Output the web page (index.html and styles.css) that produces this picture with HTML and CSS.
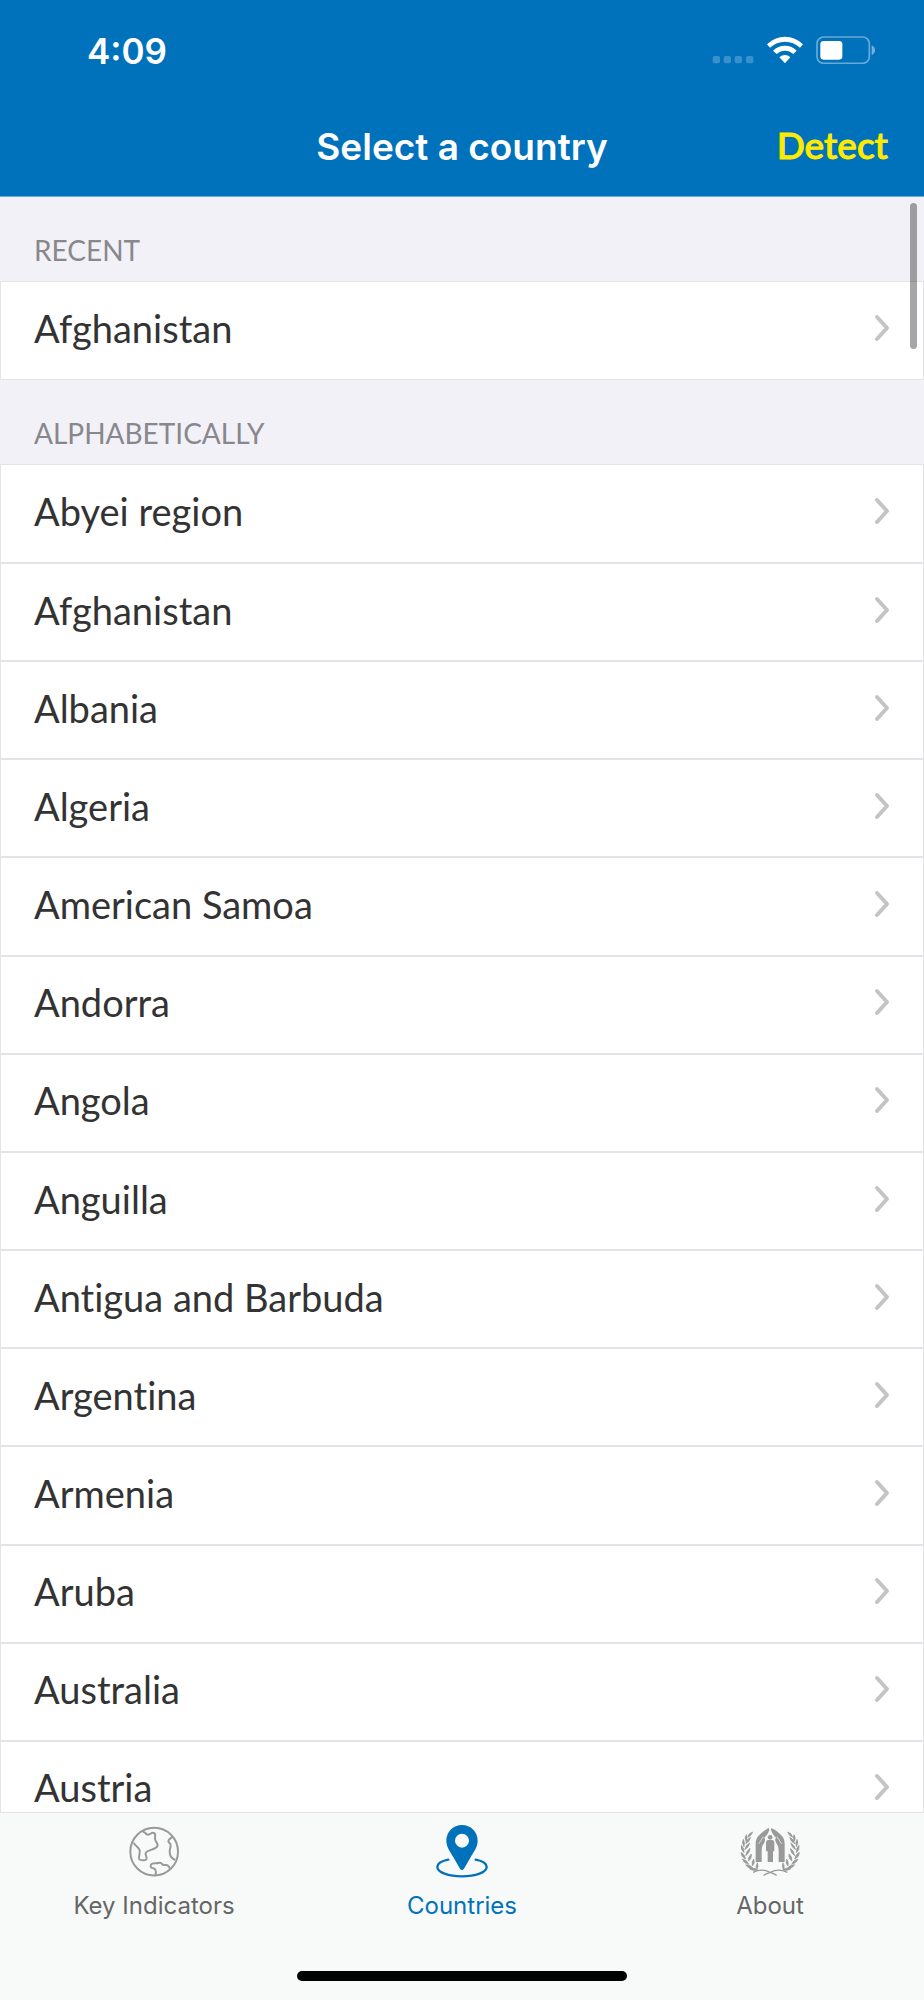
FILE: index.html
```html
<!DOCTYPE html>
<html lang="en">
<head>
<meta charset="utf-8">
<meta name="viewport" content="width=device-width, initial-scale=1">
<title>Select a country</title>
<link rel="stylesheet" href="styles.css">
</head>
<body>
<svg class="defs" aria-hidden="true">
  <symbol id="chevron" viewBox="0 0 16 28"><path d="M3 3l10 11L3 25" fill="none" stroke="currentColor" stroke-width="4" stroke-linecap="round" stroke-linejoin="round"/></symbol>
</svg>
<div class="app">
  <header class="top">
    <div class="status">
      <time class="clock">4:09</time>
      <div class="indicators">
        <svg class="signal" viewBox="96 78 126 84" aria-hidden="true"><g fill="#fff" opacity=".22"><rect x="98" y="138" width="22" height="22" rx="6"/><rect x="131" y="138" width="22" height="22" rx="6"/><rect x="164" y="138" width="22" height="22" rx="6"/><rect x="198" y="138" width="22" height="22" rx="6"/></g></svg>
        <svg class="wifi" viewBox="262 78 108 84" aria-hidden="true"><path fill="#fff" d="M262 103Q285 80 316 80T370 103L361 113Q342 95 316 95T271 113ZM280 122Q295 107 316 107T351 122L341 132Q330 122 316 122T291 132ZM299 142Q307 135 316 135T332 142L316 160Z"/></svg>
        <svg class="battery" viewBox="410 78 180 84" aria-hidden="true"><rect x="413" y="81" width="157" height="79" rx="20" fill="none" stroke="#fff" stroke-opacity=".4" stroke-width="5"/><rect x="423" y="93" width="66" height="56" rx="10" fill="#fff"/><path d="M577 106q10 5 10 14.500t-10 14.500z" fill="#fff" opacity=".45"/></svg>
      </div>
    </div>
    <div class="navbar">
      <h1 class="title">Select a country</h1>
      <button class="detect" type="button">Detect</button>
    </div>
  </header>
  <main class="content">
    <h2 class="section">RECENT</h2>
    <ul class="list">
      <li class="item"><a class="row" href="#">Afghanistan<svg class="chevron"><use href="#chevron"/></svg></a></li>
    </ul>
    <h2 class="section">ALPHABETICALLY</h2>
    <ul class="list countries">
      <li class="item"><a class="row" href="#">Abyei region<svg class="chevron"><use href="#chevron"/></svg></a></li>
      <li class="item"><a class="row" href="#">Afghanistan<svg class="chevron"><use href="#chevron"/></svg></a></li>
      <li class="item"><a class="row" href="#">Albania<svg class="chevron"><use href="#chevron"/></svg></a></li>
      <li class="item"><a class="row" href="#">Algeria<svg class="chevron"><use href="#chevron"/></svg></a></li>
      <li class="item"><a class="row" href="#">American Samoa<svg class="chevron"><use href="#chevron"/></svg></a></li>
      <li class="item"><a class="row" href="#">Andorra<svg class="chevron"><use href="#chevron"/></svg></a></li>
      <li class="item"><a class="row" href="#">Angola<svg class="chevron"><use href="#chevron"/></svg></a></li>
      <li class="item"><a class="row" href="#">Anguilla<svg class="chevron"><use href="#chevron"/></svg></a></li>
      <li class="item"><a class="row" href="#">Antigua and Barbuda<svg class="chevron"><use href="#chevron"/></svg></a></li>
      <li class="item"><a class="row" href="#">Argentina<svg class="chevron"><use href="#chevron"/></svg></a></li>
      <li class="item"><a class="row" href="#">Armenia<svg class="chevron"><use href="#chevron"/></svg></a></li>
      <li class="item"><a class="row" href="#">Aruba<svg class="chevron"><use href="#chevron"/></svg></a></li>
      <li class="item"><a class="row" href="#">Australia<svg class="chevron"><use href="#chevron"/></svg></a></li>
      <li class="item"><a class="row" href="#">Austria<svg class="chevron"><use href="#chevron"/></svg></a></li>
    </ul>
    <div class="scrollbar"></div>
  </main>
  <footer class="bottom">
    <nav class="tabs">
      <a class="tab" href="#">
        <svg class="tab-icon" viewBox="42 30 180 180" fill="none" stroke="#999" stroke-width="6" stroke-linejoin="round" aria-hidden="true"><circle cx="132.500" cy="125" r="71.500"/><path d="M98 65C107 65 105 74 114 74C122 73 124 67 130 68C137 69 136 77 135 84C134 95 143 97 143 106C143 115 133 115 125 119C118 122 109 123 107 129C105 136 113 142 109 148C105 152 91 151 88 148C84 143 91 131 89 121C86 110 76 110 71 98M187 81C181 86 175 88 175 94C175 98 182 99 182 106C182 114 178 118 179 127C180 138 187 147 196 150M136 196C140 185 137 177 130 175C124 174 120 171 123 164C126 157 138 161 144 159C151 157 154 158 156 162C159 168 169 162 174 167C176 169 178 172 180 176"/></svg>
        <span>Key Indicators</span>
      </a>
      <a class="tab active" href="#" aria-current="page">
        <svg class="tab-icon" viewBox="36 30 180 180" aria-hidden="true"><path fill="#0072bc" fill-rule="evenodd" d="M126 45C152 45 173 65 173 92C173 112 160 127 151 143L132 176Q126 184 120 176L101 143C92 127 79 112 79 92C79 65 100 45 126 45ZM126 71a21 21 0 1 0 0 42a21 21 0 1 0 0-42Z"/><path fill="none" stroke="#0072bc" stroke-width="7" stroke-linecap="round" d="M85 149C64 153 52 161 52 171C52 187 85 199 126 199S200 187 200 171C200 161 188 153 167 149"/></svg>
        <span>Countries</span>
      </a>
      <a class="tab" href="#">
        <svg class="tab-icon" viewBox="57 30 180 180" aria-hidden="true">
          <defs>
            <g id="emblem-half">
              <path d="M144 54L145 61C140 73 134 81 129 84C134 85 132 92 130 98C124 106 122 112 122 124V156H104V103C104 92 106 85 112 78C120 69 132 59 144 54Z"/>
              <path d="M127 80L113 102" stroke="#f8faf9" stroke-width="2"/>
              <path d="M95 66Q83 69 80 82Q91 78 95 66ZM76 74Q69 83 75 94Q81 83 76 74ZM89 82Q76 88 74 101Q86 96 89 82ZM67 88Q61 99 69 110Q73 98 67 88ZM86 99Q74 105 71 119Q83 113 86 99ZM61 106Q58 119 69 128Q70 115 61 106ZM87 115Q76 123 74 137Q86 130 87 115ZM60 127Q60 141 74 147Q72 134 60 127ZM91 132Q81 140 82 153Q93 146 91 132ZM64 147Q68 160 83 163Q78 150 64 147ZM98 147Q91 156 94 168Q103 160 98 147ZM74 164Q81 176 96 175Q89 164 74 164ZM109 158Q103 168 106 180Q115 170 109 158ZM85 176Q96 184 110 180Q100 171 85 176Z" stroke="#999" stroke-width="2"/>
              <path d="M96 187Q122 174 147 187Q158 190 167 196" fill="none" stroke="#999" stroke-width="4"/>
            </g>
          </defs>
          <g fill="#999"><use href="#emblem-half"/><use href="#emblem-half" transform="matrix(-1 0 0 1 295 0)"/><circle cx="147.500" cy="82" r="7"/><path d="M141 90H154Q160 91 160 98V122Q158 126 156 123V156H140V123Q137 126 135 122V98Q135 91 141 90Z"/></g>
        </svg>
        <span>About</span>
      </a>
    </nav>
    <div class="home-bar"></div>
  </footer>
</div>
</body>
</html>
```
FILE: styles.css
```css
* { box-sizing: border-box; }
body { margin: 0; font-family: Lato, "Open Sans", sans-serif; font-variant-ligatures: none; color: #333; }
a { color: inherit; text-decoration: none; }
.defs { position: absolute; width: 0; height: 0; }
.app { display: flex; flex-direction: column; height: 100vh; background: #f2f1f7; }

.top { flex: none; background: #0072bc; color: #fff; border-bottom: 1px solid #69abd7; }
.status { display: flex; align-items: center; justify-content: space-between; height: 100px; padding: 0 48px 0 87px; }
.clock { padding-top: 2px; font: 600 35px/44px Inter, sans-serif; }
.indicators { display: flex; gap: 13px; }
.indicators svg { height: 28px; }
.signal { width: 42px; }
.wifi { width: 36px; }
.battery { width: 60px; }
.navbar { display: grid; grid-template-columns: 1fr auto 1fr; align-items: center; height: 96px; padding: 0 36px 2px; }
.title { grid-column: 2; margin: 0; font: 600 37px/48px Inter, sans-serif; }
.detect { justify-self: end; padding: 0 0 4px; border: 0; background: none; color: #ffeb00; font: 500 37px/48px Lato, sans-serif; -webkit-text-stroke: 1px #ffeb00; }

.content { position: relative; flex: 1; min-height: 0; overflow: hidden; }
.section { margin: 0; padding: 35px 34px 13px; font-size: 28px; line-height: 36px; font-weight: 400; color: #88878c; }
.list { display: flex; flex-direction: column; margin: 0; padding: 0; list-style: none; background: #fff; border: 1px solid #e4e4e6; }
.countries { min-height: 1375px; }
.item { display: flex; flex: 1; min-height: 97px; }
.item + .item { border-top: 2px solid #e4e4e6; }
.row { display: flex; flex: 1; align-items: center; justify-content: space-between; padding: 0 33px 5px; font-size: 38px; line-height: 46px; }
.chevron { width: 16px; height: 28px; color: #c4c4c6; }
.scrollbar { position: absolute; top: 6px; right: 7px; width: 7px; height: 146px; border-radius: 4px; background: rgba(0, 0, 0, .35); }

.bottom { flex: none; display: flex; flex-direction: column; align-items: center; background: #f8faf9; border-top: 1px solid #e2e2e3; padding: 7px 0 19px; }
.tabs { display: grid; grid-template-columns: repeat(3, 1fr); width: 100%; margin-bottom: 49px; }
.tab { display: flex; flex-direction: column; align-items: center; gap: 10px; color: #666; font: 400 24px/32px Inter, sans-serif; }
.tab.active { color: #0072bc; }
.tab-icon { width: 60px; height: 60px; }
.home-bar { width: 330px; height: 10px; border-radius: 5px; background: #000; }
```
